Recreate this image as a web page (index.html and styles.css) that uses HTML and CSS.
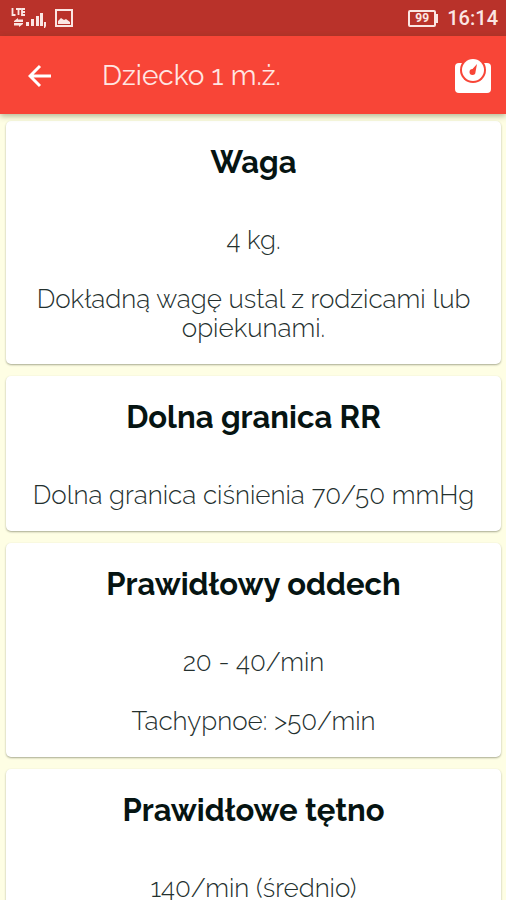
FILE: index.html
```html
<!DOCTYPE html>
<html lang="pl">
<head>
<meta charset="utf-8">
<meta name="viewport" content="width=device-width, initial-scale=1">
<title>Dziecko 1 m.ż.</title>
<link rel="stylesheet" href="styles.css">
</head>
<body>
<div class="screen">
  <div class="status">
    <div class="status-group">
      <svg class="signal" viewBox="0 0 36 20" aria-hidden="true">
        <path d="M1.500 0v7h3M5 1h5M7.500 0v7M14 1h-3v6h3M11 4h3" fill="none" stroke="currentColor" stroke-width="1.800"/>
        <path d="M3 13l4-3v1.500h5V14H3zM12 16l-4 3v-1.500H3V15h9z" fill="currentColor"/>
        <path d="M15 14h3v4h-3zM20 11h3v7h-3zM25 8h3v10h-3zM29 5h3v13h-3zM33 14h2v4l-1 2h-1z" fill="currentColor"/>
      </svg>
      <svg class="picture" viewBox="0 0 18 18" aria-hidden="true">
        <rect x="1" y="1" width="16" height="16" fill="none" stroke="currentColor" stroke-width="2"/>
        <path d="M3 15v-3l3-3 3 2 2-1 4 3v2z" fill="currentColor"/>
      </svg>
    </div>
    <div class="status-group">
      <div class="battery">99</div>
      <time class="clock">16:14</time>
    </div>
  </div>
  <header class="bar">
    <button class="icon-button" type="button" aria-label="Wstecz">
      <svg class="arrow" viewBox="0 0 24 24" aria-hidden="true"><path d="M23 12H2M12 2L2 12l10 10" fill="none" stroke="currentColor" stroke-width="3"/></svg>
    </button>
    <h1 class="bar-title">Dziecko 1 m.ż.</h1>
    <button class="icon-button" type="button" aria-label="Waga">
      <svg class="scale" viewBox="0 0 36 36" aria-hidden="true">
        <path d="M4 5h28q4 0 4 4v22q0 4-4 4H4q-4 0-4-4V9q0-4 4-4z" fill="currentColor"/>
        <circle class="dial-gap" cx="18" cy="12" r="13"/>
        <circle cx="18" cy="12" r="11" fill="currentColor"/>
        <path class="needle" d="M22 6l-1.500 8a3 3 0 1 1-3-3z"/>
      </svg>
    </button>
  </header>
  <main class="cards">
    <section class="card">
      <h2>Waga</h2>
      <p>4 kg.</p>
      <p>Dokładną wagę ustal z rodzicami lub opiekunami.</p>
    </section>
    <section class="card">
      <h2>Dolna granica RR</h2>
      <p>Dolna granica ciśnienia 70/50 mmHg</p>
    </section>
    <section class="card">
      <h2>Prawidłowy oddech</h2>
      <p>20 - 40/min</p>
      <p>Tachypnoe: &gt;50/min</p>
    </section>
    <section class="card">
      <h2>Prawidłowe tętno</h2>
      <p>140/min (średnio)</p>
    </section>
  </main>
</div>
</body>
</html>
```
FILE: styles.css
```css
* { box-sizing: border-box; }
body {
  margin: 0;
  background: #fefee4;
  color: #061412;
  font-family: Raleway, "Open Sans", sans-serif;
}
.screen {
  display: flex;
  flex-direction: column;
  height: 100vh;
  overflow: hidden;
}
.status {
  display: flex;
  flex: none;
  align-items: center;
  justify-content: space-between;
  height: 36px;
  padding: 0 8px 0 11px;
  background: #b9322a;
  color: #fbe6e3;
  font-family: Roboto, sans-serif;
}
.status-group { display: flex; align-items: center; gap: 8px; }
.signal { width: 36px; height: 20px; }
.picture { width: 18px; height: 18px; }
.battery {
  position: relative;
  width: 28px;
  height: 17px;
  margin-right: 3px;
  border: 2px solid;
  border-radius: 2px;
  font-size: 12px;
  font-weight: 700;
  line-height: 13px;
  text-align: center;
}
.battery::after {
  content: "";
  position: absolute;
  top: 2px;
  right: -4px;
  width: 3px;
  height: 9px;
  background: currentColor;
}
.clock { font-size: 20px; font-weight: 500; }
.bar {
  position: relative;
  display: flex;
  flex: none;
  align-items: center;
  height: 78px;
  padding: 2px 9px 0 16px;
  background: #f84537;
  color: #fff;
  box-shadow: 0 2px 6px rgba(60, 70, 20, 0.4);
}
.icon-button {
  display: flex;
  align-items: center;
  justify-content: center;
  width: 48px;
  height: 48px;
  padding: 0;
  border: 0;
  background: none;
  color: inherit;
}
.arrow { width: 24px; height: 24px; }
.scale { width: 36px; height: 36px; }
.dial-gap, .needle { fill: #f84537; }
.bar-title {
  flex: 1;
  margin: 0 0 0 38px;
  color: #ffe6e2;
  font-size: 28px;
  font-weight: 400;
  line-height: 32px;
}
.cards {
  display: flex;
  flex-direction: column;
  gap: 12px;
  padding: 7px 5px 0 6px;
}
.card {
  flex: none;
  padding: 24px 24px 21px;
  border-radius: 5px;
  background: #fff;
  box-shadow: 0 1px 2px rgba(40, 45, 20, 0.4);
  text-align: center;
}
.card h2 {
  margin: 0 0 47px;
  font-size: 31px;
  font-weight: 700;
  line-height: 34px;
}
.card p {
  margin: 0;
  color: #24302e;
  font-size: 26px;
  font-weight: 300;
  line-height: 29px;
}
.card p + p { margin-top: 30px; }
```
